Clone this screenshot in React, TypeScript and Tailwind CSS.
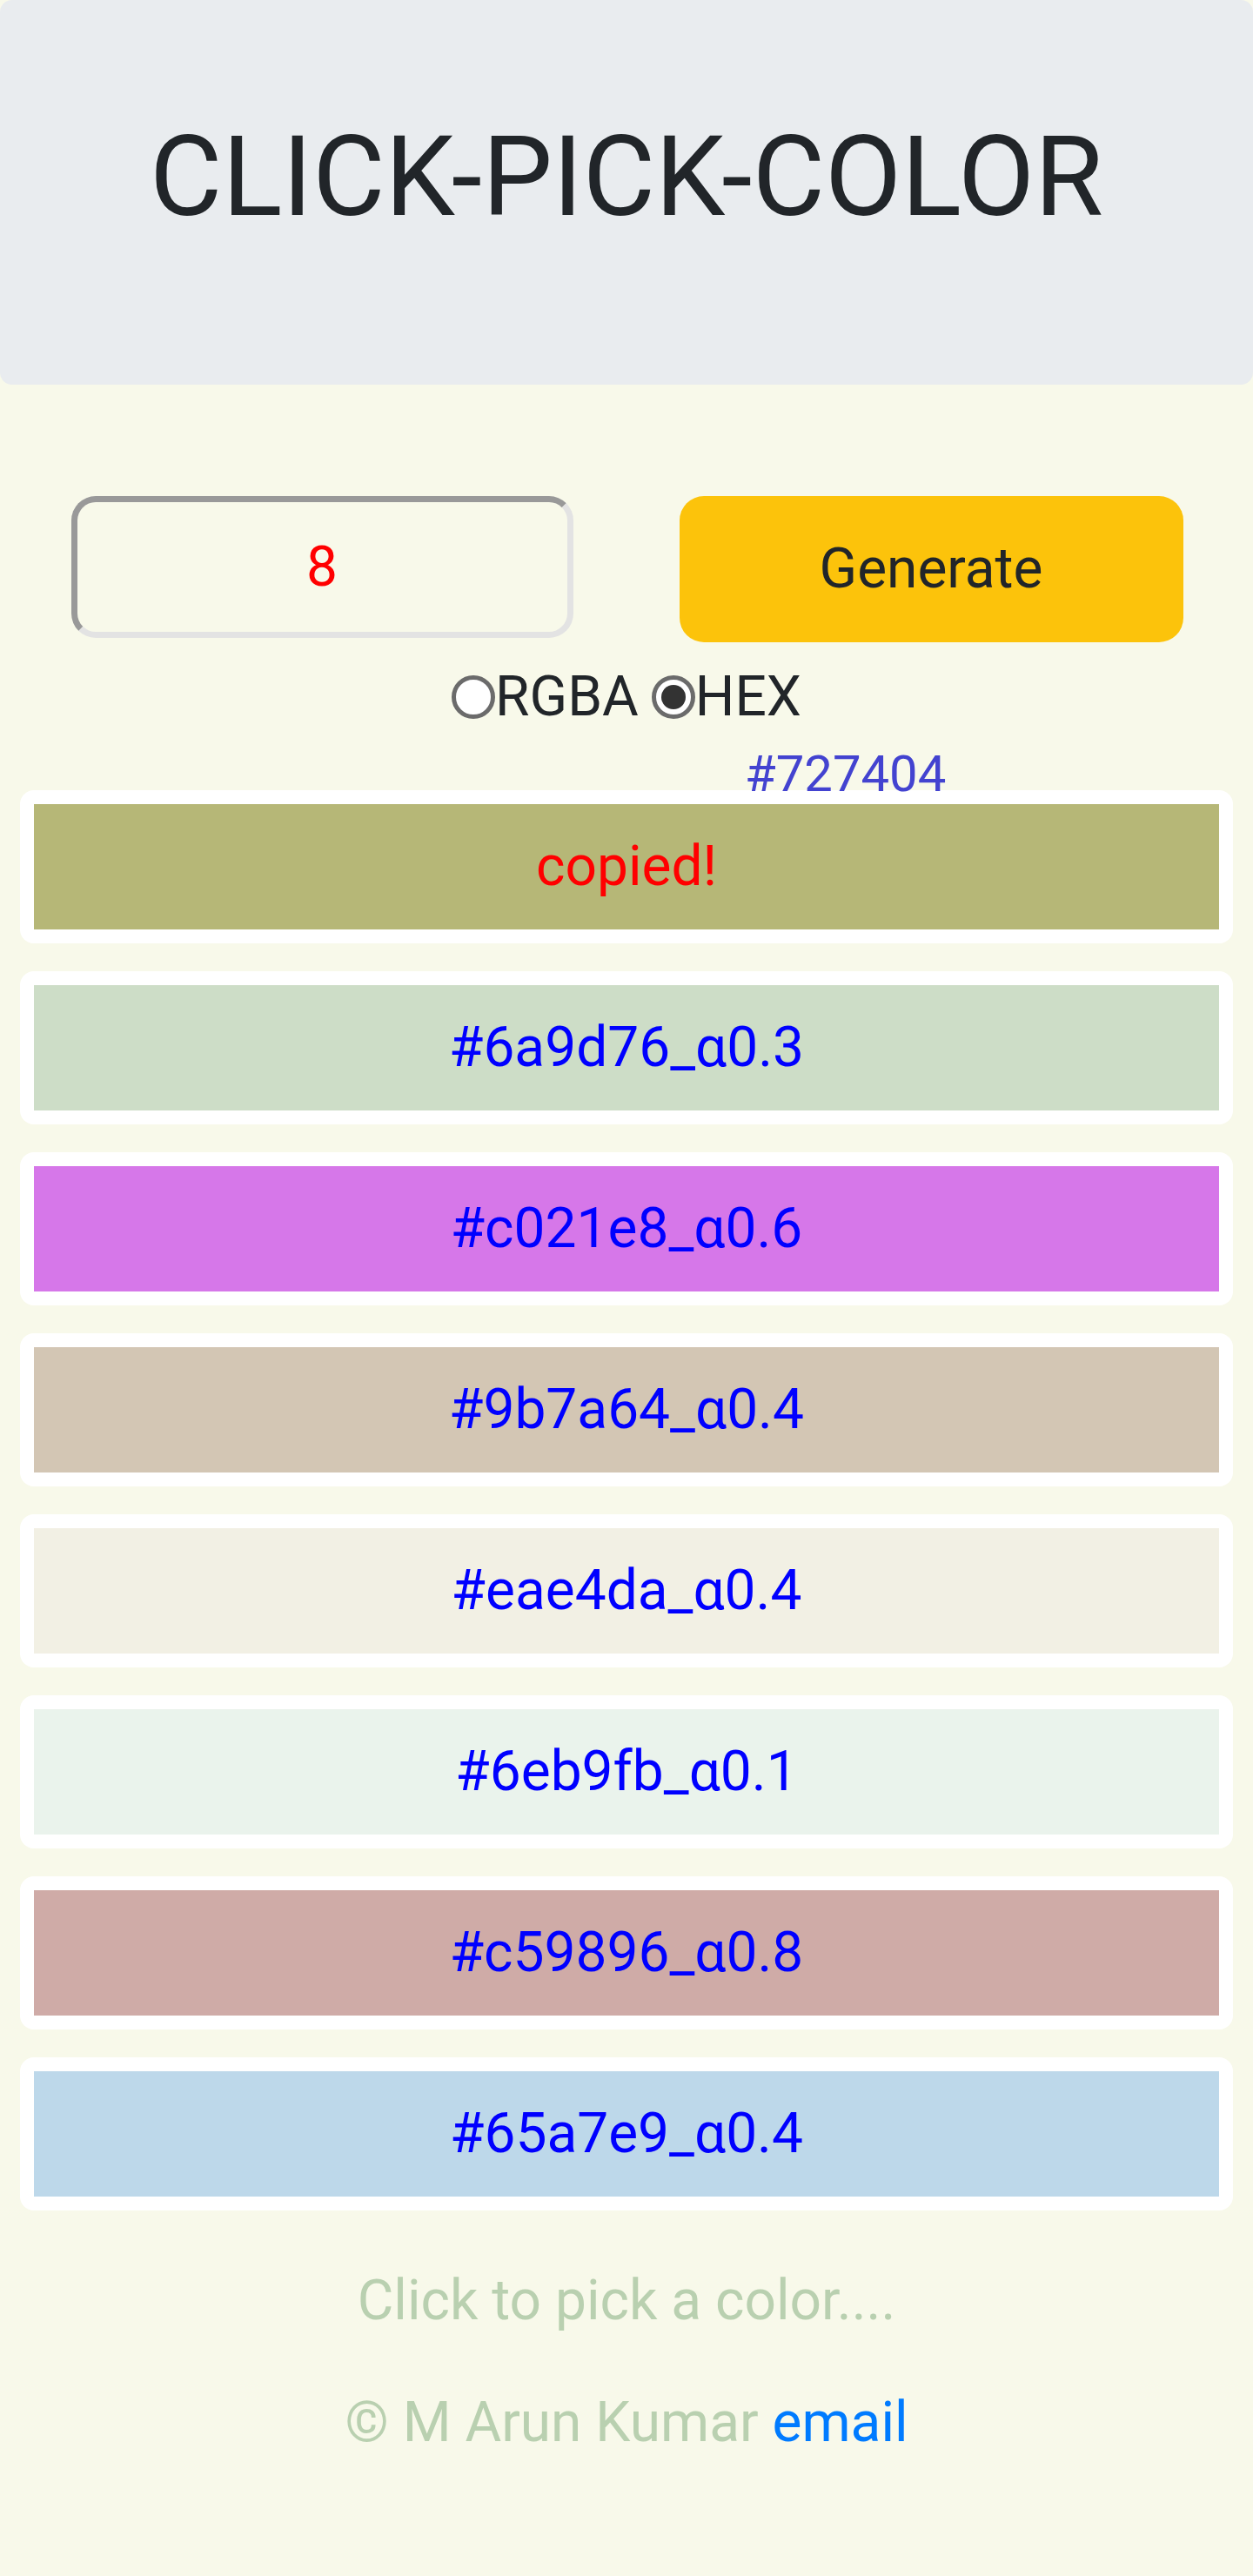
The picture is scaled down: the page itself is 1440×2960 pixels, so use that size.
const colors = [
  { label: "copied!", bg: "bg-[#b6b777]", text: "text-[#ff0000]" },
  { label: "#6a9d76_α0.3", bg: "bg-[#cdddc7]", text: "text-[#0000ff]" },
  { label: "#c021e8_α0.6", bg: "bg-[#d677e9]", text: "text-[#0000ff]" },
  { label: "#9b7a64_α0.4", bg: "bg-[#d3c6b4]", text: "text-[#0000ff]" },
  { label: "#eae4da_α0.4", bg: "bg-[#f2f0e4]", text: "text-[#0000ff]" },
  { label: "#6eb9fb_α0.1", bg: "bg-[#eaf3ec]", text: "text-[#0000ff]" },
  { label: "#c59896_α0.8", bg: "bg-[#cfaba7]", text: "text-[#0000ff]" },
  { label: "#65a7e9_α0.4", bg: "bg-[#bdd8ea]", text: "text-[#0000ff]" },
];

function Radio({ checked }: { checked?: boolean }) {
  return (
    <span className="flex h-[50px] w-[50px] items-center justify-center rounded-full border-[5px] border-[#6b6b6b] bg-white">
      {checked && <span className="h-[28px] w-[28px] rounded-full bg-[#333333]" />}
    </span>
  );
}

export default function App() {
  return (
    <div className="min-h-[2960px] bg-[#f8f9ea] font-['Roboto',sans-serif] text-[#212529]">
      {/* Header */}
      <header className="flex h-[442px] justify-center rounded-[14px] bg-[#e9ecef] pt-[139px]">
        <h1 className="text-[128px] font-normal leading-none">CLICK-PICK-COLOR</h1>
      </header>

      {/* Controls */}
      <div className="mt-[128px] flex items-start px-[20px]">
        <div className="flex flex-1 justify-center">
          <div className="flex h-[163px] w-[577px] items-center justify-center rounded-[28px] border-[7px] border-t-[#999999] border-l-[#999999] border-b-[#e3e3e3] border-r-[#e3e3e3]">
            <span className="text-[64px] leading-none text-[#ff0000]">8</span>
          </div>
        </div>
        <div className="flex flex-1 justify-center">
          <button className="flex h-[168px] w-[579px] items-center justify-center rounded-[28px] bg-[#fcc30b] text-[64px] leading-none text-[#212529]">
            Generate
          </button>
        </div>
      </div>

      <div className="mt-[31px] flex h-[64px] items-center justify-center text-[64px] leading-none">
        <Radio />
        <span className="mr-[15px]">RGBA</span>
        <Radio checked />
        <span>HEX</span>
      </div>

      {/* Colors */}
      <div className="relative mx-[23px] mt-[75px] flex flex-col gap-[32px]">
        <span className="absolute left-[833px] top-[-48px] z-10 text-[58px] leading-none text-[#4343d0]">
          #727404
        </span>
        {colors.map((c) => (
          <div key={c.label} className="rounded-[16px] bg-white p-[16px]">
            <div className={`flex h-[144px] items-center justify-center text-[64px] leading-none ${c.bg} ${c.text}`}>
              {c.label}
            </div>
          </div>
        ))}
      </div>

      {/* Footer */}
      <p className="mt-[72px] text-center text-[64px] leading-none text-[#b9d0b0]">Click to pick a color....</p>
      <p className="mt-[76px] text-center text-[64px] leading-none text-[#b9d0b0]">
        © M Arun Kumar <a href="#" className="text-[#007bff]">email</a>
      </p>
    </div>
  );
}
